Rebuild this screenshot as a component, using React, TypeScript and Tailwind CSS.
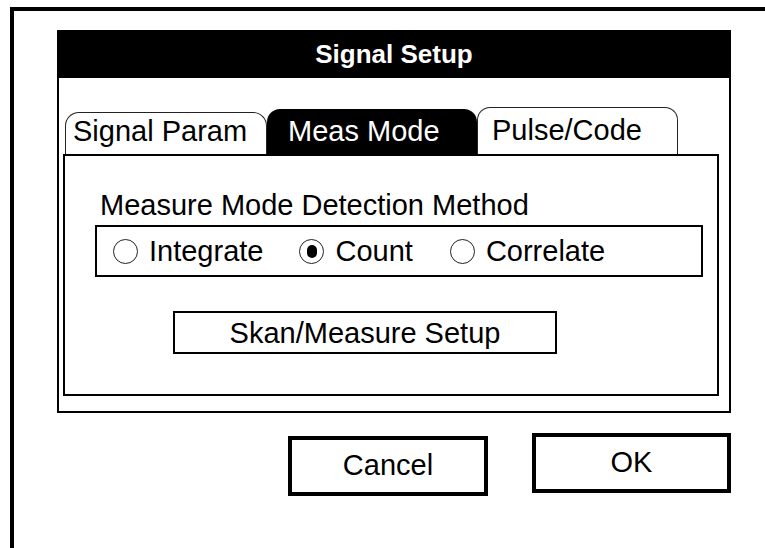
import React from 'react';

function Radio({ label, checked, className }: { label: string; checked?: boolean; className?: string }) {
  return (
    <div className={`flex items-center ${className ?? ''}`}>
      <div className="w-[25px] h-[25px] rounded-full border-[1.5px] border-[#222] flex items-center justify-center">
        {checked && <div className="w-[10px] h-[13px] rounded-full bg-black" />}
      </div>
      <span className="ml-[11px]">{label}</span>
    </div>
  );
}

export default function App() {
  return (
    <div
      className="w-[765px] h-[548px] bg-white overflow-hidden pl-[10px] pt-[7px] text-black"
      style={{ fontFamily: '"Liberation Sans", Arial, sans-serif' }}
    >
      <div className="h-full border-l-4 border-t-4 border-black pl-[43px] pt-[19px]">
        <div className="w-[674px]">
          {/* title */}
          <div className="h-[48px] bg-black text-white font-bold text-[26px] flex items-center justify-center">
            Signal Setup
          </div>

          {/* body */}
          <div className="h-[335px] border-x-2 border-b-2 border-black pl-[4px] pr-[10px] pt-[29px]">
            <div className="h-[47px] flex items-end pl-[2px] text-[29px] leading-[32px]">
              <div className="h-[42px] w-[202px] border-[1.5px] border-b-0 border-[#222] rounded-t-[14px] pl-[7px] pt-[2px]">
                Signal Param
              </div>
              <div className="h-[45px] w-[210px] bg-black text-white rounded-t-[13px] pl-[21px] pt-[6px]">
                Meas Mode
              </div>
              <div className="h-[47px] w-[201px] border-[1.5px] border-b-0 border-[#222] rounded-t-[13px] pl-[14px] pt-[6px]">
                Pulse/Code
              </div>
            </div>

            <div className="h-[242px] border-2 border-black pt-[33px] text-[29px] leading-[32px]">
              <div className="pl-[35px]">Measure Mode Detection Method</div>
              <div className="ml-[30px] mt-[4px] w-[608px] h-[52px] border-2 border-black flex items-center pl-[16px]">
                <Radio label="Integrate" />
                <Radio label="Count" checked className="ml-[36px]" />
                <Radio label="Correlate" className="ml-[37px]" />
              </div>
              <div className="ml-[108px] mt-[34px] w-[384px] h-[43px] border-2 border-black flex items-center justify-center">
                Skan/Measure Setup
              </div>
            </div>
          </div>

          {/* buttons */}
          <div className="flex items-start pl-[231px] mt-[20px] text-[29px]">
            <div className="mt-[3px] w-[202px] h-[60px] border-4 border-black flex items-center justify-center">
              Cancel
            </div>
            <div className="ml-[44px] w-[201px] h-[60px] border-4 border-black flex items-center justify-center">
              OK
            </div>
          </div>
        </div>
      </div>
    </div>
  );
}
